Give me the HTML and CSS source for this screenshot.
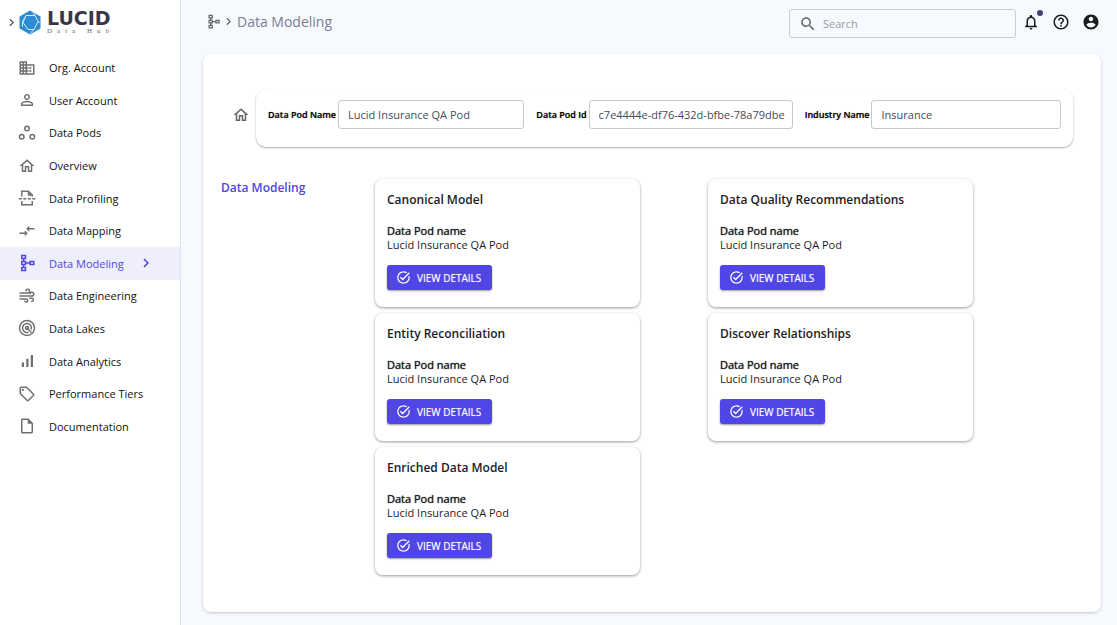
FILE: index.html
```html
<!DOCTYPE html>
<html lang="en">
<head>
<meta charset="utf-8">
<meta name="viewport" content="width=device-width, initial-scale=1">
<title>Lucid Data Hub - Data Modeling</title>
<link rel="stylesheet" href="styles.css">
</head>
<body>
<svg class="symbols" aria-hidden="true">
  <symbol id="chevron" viewBox="0 0 24 24"><path d="M10 6 8.59 7.41 13.17 12l-4.58 4.59L10 18l6-6z"/></symbol>
  <symbol id="home" viewBox="0 0 24 24"><path d="M12 5.69l5 4.5V18h-2v-6H9v6H7v-7.81l5-4.5M12 3L2 12h3v8h6v-6h2v6h6v-8h3L12 3z"/></symbol>
  <symbol id="schema" viewBox="0 0 24 24"><path fill="none" stroke="currentColor" stroke-width="2" d="M5 2h5v4H5zM5 10h5v4H5zM5 18h5v4H5zM16 10h5v4h-5zM7.500 6v4M7.500 14v4M10 12h6"/></symbol>
  <symbol id="task" viewBox="0 0 24 24"><path d="M22 5.180L10.590 16.600l-4.240-4.240 1.410-1.410 2.830 2.830 10-10L22 5.180zm-2.210 5.040c.13.57.21 1.170.21 1.780 0 4.420-3.580 8-8 8s-8-3.580-8-8 3.580-8 8-8c1.580 0 3.040.46 4.280 1.250l1.440-1.440C16.100 2.670 14.130 2 12 2 6.480 2 2 6.480 2 12s4.480 10 10 10 10-4.480 10-10c0-1.190-.22-2.330-.6-3.390l-1.610 1.610z"/></symbol>
</svg>
<div class="app">
  <aside class="sidebar">
    <div class="brand">
      <button class="expand" aria-label="Expand menu"><svg class="icon"><use href="#chevron"/></svg></button>
      <svg class="mark" viewBox="0 0 22 24" aria-hidden="true">
        <path fill="#2b8bd3" d="M11 0l10.500 6v12L11 24 .5 18V6z"/>
        <path fill="none" stroke="#d5eafa" stroke-width="1" d="M7 5l9 0 3 6-4 8H9l-5-7zM7 5L3.500 11v5M16 5l-2-3M19 11l2 1M15 19l-4 4"/>
      </svg>
      <div class="wordmark"><span class="name">LUCID</span><span class="tagline">Data Hub</span></div>
    </div>
    <nav class="nav" aria-label="Main">
      <a href="#"><svg class="icon" viewBox="0 0 24 24"><path d="M12 7V3H2v18h20V7H12zM6 19H4v-2h2v2zm0-4H4v-2h2v2zm0-4H4V9h2v2zm0-4H4V5h2v2zm4 12H8v-2h2v2zm0-4H8v-2h2v2zm0-4H8V9h2v2zm0-4H8V5h2v2zm10 12h-8v-2h2v-2h-2v-2h2v-2h-2V9h8v10zm-2-8h-3v2h3v-2zm0 4h-3v2h3v-2z"/></svg>Org. Account</a>
      <a href="#"><svg class="icon" viewBox="0 0 24 24"><path d="M12 5.900c1.160 0 2.100.94 2.100 2.100s-.94 2.100-2.100 2.100S9.900 9.160 9.900 8s.94-2.100 2.100-2.100m0 9c2.970 0 6.100 1.460 6.100 2.100v1.100H5.900V17c0-.64 3.130-2.100 6.100-2.100M12 4C9.790 4 8 5.790 8 8s1.790 4 4 4 4-1.790 4-4-1.790-4-4-4zm0 9c-2.670 0-8 1.340-8 4v3h16v-3c0-2.660-5.330-4-8-4z"/></svg>User Account</a>
      <a href="#"><svg class="icon" viewBox="0 0 24 24"><g fill="none" stroke="currentColor" stroke-width="2"><circle cx="12" cy="6" r="3"/><circle cx="5" cy="17" r="3"/><circle cx="19" cy="17" r="3"/></g></svg>Data Pods</a>
      <a href="#"><svg class="icon"><use href="#home"/></svg>Overview</a>
      <a href="#"><svg class="icon" viewBox="0 0 24 24"><g fill="none" stroke="currentColor" stroke-width="2"><path d="M5 10V3h9l5 5v2M5 16v5h14v-5M1 13h4M7 13h4M13 13h4M19 13h4"/></g><path d="M13 3v6h6z"/></svg>Data Profiling</a>
      <a href="#"><svg class="icon" viewBox="0 0 24 24"><path d="M9.010 14H2v2h7.010v3L13 15l-3.990-4v3zm5.980-1v-3H22V8h-7.010V5L11 9l3.990 4z"/></svg>Data Mapping</a>
      <a href="#" class="active" aria-current="page"><svg class="icon"><use href="#schema"/></svg>Data Modeling<svg class="icon more"><use href="#chevron"/></svg></a>
      <a href="#"><svg class="icon" viewBox="0 0 24 24"><path fill="none" stroke="currentColor" stroke-width="2" d="M2 8h11A2.500 2.500 0 1 0 10.500 5.500M2 12h16.500A2.500 2.500 0 1 0 16 9.500M2 16h9a2 2 0 1 1-2 2M15 15h3.500a2 2 0 1 1-1 3.700"/></svg>Data Engineering</a>
      <a href="#"><svg class="icon" viewBox="0 0 24 24"><g fill="none" stroke="currentColor" stroke-width="2"><circle cx="12" cy="12" r="10"/><path d="M14 17.700A6 6 0 1 1 17.700 14M12 12l6 6"/><circle cx="12" cy="12" r="2"/></g></svg>Data Lakes</a>
      <a href="#"><svg class="icon" viewBox="0 0 24 24"><path d="M17 4h3v16h-3zM5 14h3v6H5zm6-5h3v11h-3z"/></svg>Data Analytics</a>
      <a href="#"><svg class="icon" viewBox="0 0 24 24"><path d="M21.410 11.580l-9-9C12.050 2.220 11.550 2 11 2H4c-1.100 0-2 .9-2 2v7c0 .55.22 1.050.59 1.420l9 9c.36.36.86.58 1.410.58s1.050-.22 1.410-.59l7-7c.37-.36.59-.86.59-1.410s-.23-1.060-.59-1.420zM13 20.010L4 11V4h7v-.01l9 9-7 7.020z"/><circle cx="6.500" cy="6.500" r="1.500"/></svg>Performance Tiers</a>
      <a href="#"><svg class="icon" viewBox="0 0 24 24"><path d="M14 2H6c-1.100 0-1.990.9-1.990 2L4 20c0 1.100.89 2 1.990 2H18c1.100 0 2-.9 2-2V8l-6-6zM6 20V4h7v5h5v11H6z"/></svg>Documentation</a>
    </nav>
  </aside>
  <main class="main">
    <header class="topbar">
      <svg class="icon crumb-icon"><use href="#schema"/></svg>
      <svg class="icon crumb-icon"><use href="#chevron"/></svg>
      <h1>Data Modeling</h1>
      <label class="search">
        <svg class="icon" viewBox="0 0 24 24" aria-hidden="true"><path d="M15.500 14h-.79l-.28-.27C15.410 12.590 16 11.110 16 9.500 16 5.910 13.090 3 9.500 3S3 5.910 3 9.500 5.910 16 9.500 16c1.610 0 3.090-.59 4.230-1.570l.27.28v.79l5 4.990L20.490 19l-4.990-5zm-6 0C7.010 14 5 11.990 5 9.500S7.010 5 9.500 5 14 7.010 14 9.500 11.990 14 9.500 14z"/></svg>
        <input type="search" placeholder="Search" aria-label="Search">
      </label>
      <div class="actions">
        <button class="bell" aria-label="Notifications"><svg class="icon" viewBox="0 0 24 24"><path d="M12 22c1.100 0 2-.9 2-2h-4c0 1.100.9 2 2 2zm6-6v-5c0-3.070-1.630-5.640-4.500-6.320V4c0-.83-.67-1.500-1.500-1.500s-1.500.67-1.500 1.500v.68C7.640 5.360 6 7.920 6 11v5l-2 2v1h16v-1l-2-2zm-2 1H8v-6c0-2.480 1.510-4.500 4-4.500s4 2.020 4 4.500v6z"/></svg></button>
        <button aria-label="Help"><svg class="icon" viewBox="0 0 24 24"><path d="M11 18h2v-2h-2v2zm1-16C6.480 2 2 6.480 2 12s4.480 10 10 10 10-4.480 10-10S17.520 2 12 2zm0 18c-4.410 0-8-3.590-8-8s3.590-8 8-8 8 3.590 8 8-3.590 8-8 8zm0-14c-2.210 0-4 1.790-4 4h2c0-1.100.9-2 2-2s2 .9 2 2c0 2-3 1.750-3 5h2c0-2.250 3-2.500 3-5 0-2.210-1.790-4-4-4z"/></svg></button>
        <button aria-label="Account"><svg class="icon" viewBox="0 0 24 24"><path d="M12 2C6.480 2 2 6.480 2 12s4.480 10 10 10 10-4.480 10-10S17.520 2 12 2zm0 3c1.660 0 3 1.340 3 3s-1.340 3-3 3-3-1.340-3-3 1.340-3 3-3zm0 14.200c-2.500 0-4.710-1.280-6-3.220.03-1.990 4-3.080 6-3.080 1.990 0 5.970 1.090 6 3.080-1.290 1.940-3.500 3.220-6 3.220z"/></svg></button>
      </div>
    </header>
    <section class="panel">
      <div class="pod-row">
        <a href="#" class="home" aria-label="Home"><svg class="icon"><use href="#home"/></svg></a>
        <form class="pod">
          <div class="field"><label for="pod-name">Data Pod Name</label><input id="pod-name" value="Lucid Insurance QA Pod"></div>
          <div class="field"><label for="pod-id">Data Pod Id</label><input id="pod-id" value="c7e4444e-df76-432d-bfbe-78a79dbe"></div>
          <div class="field"><label for="industry">Industry Name</label><input id="industry" value="Insurance"></div>
        </form>
      </div>
      <div class="content">
        <h2>Data Modeling</h2>
        <div class="cards">
          <article class="card"><h3>Canonical Model</h3><h4>Data Pod name</h4><p>Lucid Insurance QA Pod</p><button><svg class="icon"><use href="#task"/></svg>VIEW DETAILS</button></article>
          <article class="card"><h3>Data Quality Recommendations</h3><h4>Data Pod name</h4><p>Lucid Insurance QA Pod</p><button><svg class="icon"><use href="#task"/></svg>VIEW DETAILS</button></article>
          <article class="card"><h3>Entity Reconciliation</h3><h4>Data Pod name</h4><p>Lucid Insurance QA Pod</p><button><svg class="icon"><use href="#task"/></svg>VIEW DETAILS</button></article>
          <article class="card"><h3>Discover Relationships</h3><h4>Data Pod name</h4><p>Lucid Insurance QA Pod</p><button><svg class="icon"><use href="#task"/></svg>VIEW DETAILS</button></article>
          <article class="card"><h3>Enriched Data Model</h3><h4>Data Pod name</h4><p>Lucid Insurance QA Pod</p><button><svg class="icon"><use href="#task"/></svg>VIEW DETAILS</button></article>
        </div>
      </div>
    </section>
  </main>
</div>
</body>
</html>
```
FILE: styles.css
```css
* { box-sizing: border-box; }
body { margin: 0; font-family: "Open Sans", "Noto Sans", sans-serif; font-size: 11px; color: #1c1c1f; background: #f6f9fd; }
h1, h2, h3, h4, p { margin: 0; }
button { font: inherit; color: inherit; border: 0; padding: 0; background: none; cursor: pointer; }
a { color: inherit; text-decoration: none; }
.symbols { display: none; }
.icon { width: 18px; height: 18px; flex: none; fill: currentColor; display: block; }

.app { display: flex; min-height: 100vh; }
.sidebar { flex: none; width: 181px; background: #fff; border-right: 1px solid #dfe4e9; }
.brand { display: flex; align-items: center; height: 44px; padding-left: 4px; }
.expand .icon { width: 15px; height: 15px; color: #555; }
.mark { width: 22px; height: 25px; }
.wordmark { display: flex; flex-direction: column; margin-left: 6px; color: #38384a; }
.name { font: bold 19px/18px "DejaVu Sans", sans-serif; }
.tagline { font: 7px/8px "Liberation Serif", serif; letter-spacing: 5px; white-space: nowrap; color: #666; }
.nav { display: grid; grid-auto-rows: 1fr; min-height: 391px; margin-top: 8px; }
.nav a { display: flex; align-items: center; gap: 13px; padding: 0 0 1px 18px; color: #111; }
.nav .icon { color: #707070; }
.nav .active, .nav .active .icon { color: #5046e5; }
.nav .active { background: #efeffc; }

.main { flex: 1; min-width: 0; padding: 0 16px 13px 22px; display: flex; flex-direction: column; }
.topbar { display: flex; align-items: center; height: 54px; padding: 0 1px 11px 3px; }
.crumb-icon { width: 15px; height: 15px; color: #666; }
h1 { font-size: 14px; font-weight: 400; color: #7c7c9a; margin-left: 1px; }
.search { display: flex; align-items: center; gap: 6px; width: 227px; height: 29px; margin: 4px 0 0 auto; padding: 0 9px; border: 1px solid #c9cdd2; border-radius: 3px; color: #666; }
.search input { min-width: 0; flex: 1; border: 0; outline: 0; padding: 0; font: inherit; background: none; }
.search input::placeholder { color: #9a9da1; opacity: 1; }
.actions { display: flex; gap: 12px; margin-left: 6px; color: #1c1c1c; }
.bell { position: relative; }
.bell::after { content: ""; position: absolute; top: -3px; right: -3px; width: 6px; height: 6px; border-radius: 50%; background: #453c7c; }

.panel { flex: 1; padding: 35px 28px 36px 18px; background: #fff; border-radius: 8px; box-shadow: 0 1px 3px #0003; }
.pod-row { display: flex; align-items: center; }
.home { width: 35px; padding-left: 11px; margin-bottom: 6px; color: #666; }
.pod { flex: 1; display: flex; gap: 12px; padding: 11px 12px 18px; border-radius: 10px; box-shadow: 0 1px 2px #0005; }
.field { display: flex; flex: 1; align-items: center; gap: 2px; }
.field label { font-size: 9px; font-weight: 600; color: #000; text-shadow: 0 0 1px #0008; white-space: nowrap; }
.field input { flex: 1; min-width: 0; height: 29px; padding: 0 4px 0 9px; border: 1px solid #c8c8c8; border-radius: 3px; font: inherit; color: #454a5c; background: #fff; }
.content { display: grid; grid-template-columns: 154px 1fr; margin-top: 32px; padding-right: 100px; }
h2 { font-size: 12px; line-height: 17px; font-weight: 600; color: #5046e5; }
.cards { display: grid; grid-template-columns: 1fr 1fr; gap: 6px 68px; }
.card { padding: 12px 12px 17px; border-radius: 8px; background: #fff; box-shadow: 0 1px 3px #0006; }
h3 { font-size: 12px; line-height: 17px; font-weight: 600; }
h4 { font-size: 11px; line-height: 15px; font-weight: 400; text-shadow: 0 0 1px currentColor; margin-top: 15px; }
.card p { line-height: 14px; }
.card button { display: flex; align-items: center; gap: 6px; height: 25px; margin-top: 13px; padding: 0 11px 0 9px; font-size: 10px; font-weight: 500; text-shadow: 0 0 1px #fff8; color: #fff; background: #5046e5; border-radius: 3px; box-shadow: 0 1px 2px #0006; }
.card button .icon { width: 15px; height: 15px; }
```
